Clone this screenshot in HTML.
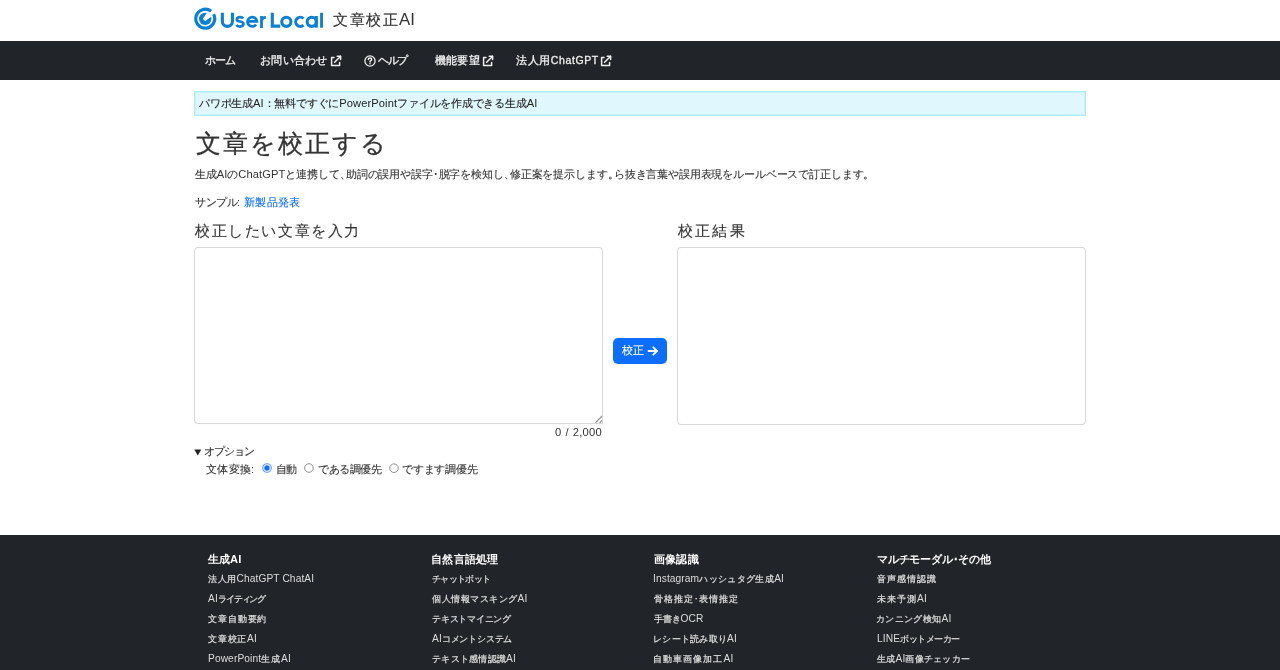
<!DOCTYPE html>
<html lang="ja">
<head>
<meta charset="utf-8">
<style>
*{box-sizing:border-box;margin:0;padding:0}
html,body{width:1280px;height:670px;overflow:hidden;background:#fff}
body{font-family:"Liberation Sans",sans-serif;color:#333;position:relative}
.t{position:absolute;white-space:nowrap;line-height:1.2;will-change:transform}
#nav{position:absolute;left:0;top:41px;width:1280px;height:39px;background:#212529}
#alert{position:absolute;left:194px;top:91px;width:892px;height:25px;background:#dff7fd;border:1px solid #acedfb;box-shadow:inset 0 0 0 1px #c6f2fc}
.box{position:absolute;top:247px;width:409px;height:177px;border:1px solid #d8d8d8;border-radius:4px;box-shadow:0 0 1.5px rgba(0,0,0,0.06);background:#fff}
#btn{position:absolute;left:613px;top:338px;width:54px;height:26px;background:#0d6efd;border-radius:5px}
#foot{position:absolute;left:0;top:535px;width:1280px;height:135px;background:#212529}
.L{letter-spacing:0.1px;-webkit-text-stroke:0;line-height:0}
.P{letter-spacing:-0.45em}
.radio{position:absolute;width:10px;height:10px;border-radius:50%;border:1px solid #8a8a8a;background:#fff}
</style>
</head>
<body>
<svg style="position:absolute;left:192px;top:5px" width="28" height="28" viewBox="0 0 28 28">
<defs><mask id="m1"><rect width="28" height="28" fill="#fff"/><circle cx="13.2" cy="13.8" r="1.9" fill="#000"/><path d="M11.1 13.8L15.3 7L20.4 11L13.8 15.5Z" fill="#000"/></mask></defs>
<path d="M19.1 6.25A9.45 9.45 0 1 0 21.6 9.25" fill="none" stroke="#0b80d4" stroke-width="3.2"/>
<circle cx="13.2" cy="13.85" r="6.2" fill="#0b80d4" mask="url(#m1)"/>
</svg><svg style="position:absolute;left:218px;top:8px" width="110" height="24" viewBox="0 0 110 24"><g fill="none" stroke="#0b80d4" stroke-width="3.1">
<path d="M4.35 4.8V13.3A5.05 5.05 0 0 0 14.45 13.3V4.8"/>
<path d="M25.3 10.5C24.5 9.5 23.3 9.05 22.1 9.05C20.1 9.05 18.9 10.0 18.9 11.4C18.9 14.3 25.45 12.8 25.45 15.8C25.45 17.5 24.0 18.55 21.9 18.55C20.4 18.55 19.0 18.0 18.2 17.0" stroke-width="2.7"/>
<path d="M29.5 13.3H38.9A4.7 4.7 0 1 0 38.05 16.5" stroke-width="2.7"/>
<path d="M43.5 19.9V7.9M43.5 12.6C44 10.3 45.6 9.3 47.9 9.3" stroke-width="2.8"/>
<path d="M54.3 4.8V18.15H62.2"/>
<circle cx="68.35" cy="13.8" r="4.6"/>
<path d="M85.5 10.5A4.6 4.6 0 1 0 85.5 17.1"/>
<circle cx="93.75" cy="13.8" r="4.6"/>
<path d="M98.3 8V19.7"/>
<path d="M103.55 4.8V19.7" stroke-width="2.9"/>
</g></svg>
<div class="t" id="logo2" style="left:333.00px;top:11.15px;font-size:15.00px;letter-spacing:1.500px;color:#333;-webkit-text-stroke:0.2px currentColor;">文章校正<span class="L" style="font-size:1.12em">AI</span></div>
<div id="nav"></div>
<div class="t" id="n1" style="left:205.00px;top:54.05px;font-size:10.50px;letter-spacing:-1.000px;color:#f0f0f0;-webkit-text-stroke:0.3px currentColor;">ホーム</div>
<div class="t" id="n2" style="left:260.00px;top:54.05px;font-size:10.50px;letter-spacing:0.300px;color:#f0f0f0;-webkit-text-stroke:0.3px currentColor;">お問い合わせ</div>
<svg width="12" height="12" viewBox="0 0 12 12" style="position:absolute;left:329.8px;top:55px"><g fill="none" stroke="#f0f0f0" stroke-width="1.5" stroke-linecap="round" stroke-linejoin="round"><path d="M4 2.5H1.6V10.6H9.6V7.6"/><path d="M4.6 7.2L10.6 1.2"/><path d="M7.2 1.2H10.6V4.6"/></g></svg>
<svg width="12" height="12" viewBox="0 0 12 12" style="position:absolute;left:364px;top:55px"><circle cx="6" cy="6" r="5.1" fill="none" stroke="#f0f0f0" stroke-width="1.3"/><path d="M4.3 4.6C4.3 3.6 5 3 6 3S7.7 3.6 7.7 4.5C7.7 5.5 6.4 5.7 6.1 6.4V7" fill="none" stroke="#f0f0f0" stroke-width="1.5" stroke-linecap="round"/><circle cx="6.05" cy="8.8" r="0.8" fill="#f0f0f0"/></svg>
<div class="t" id="n3" style="left:378.20px;top:54.05px;font-size:10.50px;letter-spacing:-1.500px;color:#f0f0f0;-webkit-text-stroke:0.3px currentColor;">ヘルプ</div>
<div class="t" id="n4" style="left:434.60px;top:54.05px;font-size:10.50px;letter-spacing:0.167px;color:#f0f0f0;-webkit-text-stroke:0.3px currentColor;">機能要望</div>
<svg width="12" height="12" viewBox="0 0 12 12" style="position:absolute;left:481.5px;top:55px"><g fill="none" stroke="#f0f0f0" stroke-width="1.5" stroke-linecap="round" stroke-linejoin="round"><path d="M4 2.5H1.6V10.6H9.6V7.6"/><path d="M4.6 7.2L10.6 1.2"/><path d="M7.2 1.2H10.6V4.6"/></g></svg>
<div class="t" id="n5" style="left:516.40px;top:54.05px;font-size:10.50px;letter-spacing:0.611px;color:#f0f0f0;-webkit-text-stroke:0.3px currentColor;">法人用ChatGPT</div>
<svg width="12" height="12" viewBox="0 0 12 12" style="position:absolute;left:599.8px;top:55px"><g fill="none" stroke="#f0f0f0" stroke-width="1.5" stroke-linecap="round" stroke-linejoin="round"><path d="M4 2.5H1.6V10.6H9.6V7.6"/><path d="M4.6 7.2L10.6 1.2"/><path d="M7.2 1.2H10.6V4.6"/></g></svg>
<div id="alert"></div>
<div class="t" id="alert_t" style="left:199.00px;top:96.75px;font-size:10.60px;letter-spacing:-0.208px;color:#222;-webkit-text-stroke:0.12px currentColor;">パワポ生成<span class="L" style="font-size:1.05em">AI</span>：無料ですぐに<span class="L" style="font-size:1.05em">PowerPoint</span>ファイルを作成できる生成<span class="L" style="font-size:1.05em">AI</span></div>
<div class="t" id="h1" style="left:195.60px;top:127.70px;font-size:25.00px;letter-spacing:2.000px;color:#333;-webkit-text-stroke:0.3px currentColor;">文章を校正する</div>
<div class="t" id="desc" style="left:194.60px;top:168.40px;font-size:10.60px;letter-spacing:-0.148px;color:#333;-webkit-text-stroke:0.12px currentColor;">生成<span class="L" style="font-size:1.05em">AI</span>の<span class="L" style="font-size:1.05em">ChatGPT</span>と連携して<span class="P">、</span>助詞の誤用や誤字･脱字を検知し<span class="P">、</span>修正案を提示します<span class="P">。</span>ら抜き言葉や誤用表現をルールベースで訂正します<span class="P">。</span></div>
<div class="t" id="sample" style="left:195.00px;top:196.33px;font-size:10.60px;letter-spacing:-0.500px;color:#333;-webkit-text-stroke:0.12px currentColor;">サンプル<span class="L" style="font-size:1.05em">:</span></div>
<div class="t" id="sample_l" style="left:243.80px;top:196.33px;font-size:10.60px;letter-spacing:0.250px;color:#0d6efd;-webkit-text-stroke:0.12px currentColor;">新製品発表</div>
<div class="t" id="h2a" style="left:194.60px;top:222.40px;font-size:15.00px;letter-spacing:1.611px;color:#333;-webkit-text-stroke:0.12px currentColor;">校正したい文章を入力</div>
<div class="t" id="h2b" style="left:677.60px;top:222.40px;font-size:15.00px;letter-spacing:2.167px;color:#333;-webkit-text-stroke:0.12px currentColor;">校正結果</div>
<div class="box" style="left:194px;border-bottom-right-radius:0"></div>
<svg width="8" height="8" style="position:absolute;left:594px;top:415px"><path d="M8.2 1L1.4 7.8M8.2 5.2L5.6 7.8" stroke="#858585" stroke-width="1.1"/></svg>
<div class="box" style="left:677px;height:178px"></div>
<div id="btn"></div>
<div class="t" id="btn_t" style="left:622.40px;top:344.10px;font-size:10.60px;letter-spacing:-0.500px;color:#fff;-webkit-text-stroke:0.12px currentColor;">校正</div>
<svg width="12" height="12" viewBox="0 0 12 12" style="position:absolute;left:647px;top:345px"><g fill="none" stroke="#fff" stroke-width="1.8" stroke-linecap="round" stroke-linejoin="round"><path d="M1.5 6H9.8"/><path d="M6.3 2.3L10 6L6.3 9.7"/></g></svg>
<div class="t" id="counter" style="left:555.40px;top:426.30px;font-size:11.20px;letter-spacing:0.250px;color:#333;word-spacing:0.6px">0 / 2,000</div>
<svg width="8" height="7" style="position:absolute;left:194px;top:449px"><path d="M0.3 0.6H7.3L3.8 6.4Z" fill="#222"/></svg>
<div class="t" id="opt" style="left:204.20px;top:444.60px;font-size:10.60px;letter-spacing:-1.000px;color:#333;-webkit-text-stroke:0.12px currentColor;">オプション</div>
<div class="t" id="bunta" style="left:205.80px;top:462.73px;font-size:10.60px;letter-spacing:0.250px;color:#333;-webkit-text-stroke:0.12px currentColor;">文体変換<span class="L" style="font-size:1.05em">:</span></div>
<svg width="12" height="12" style="position:absolute;left:261.2px;top:462px"><circle cx="6" cy="6" r="4.3" fill="#fff" stroke="#5b9cf8" stroke-width="1.1"/><circle cx="6" cy="6" r="2.7" fill="#0d6efd"/></svg>
<div class="t" id="r1" style="left:276.00px;top:462.73px;font-size:10.60px;letter-spacing:-1.500px;color:#333;-webkit-text-stroke:0.12px currentColor;">自動</div>
<svg width="12" height="12" style="position:absolute;left:303px;top:462px"><circle cx="5.9" cy="6" r="4.3" fill="#fff" stroke="#8f8f8f" stroke-width="1"/></svg>
<div class="t" id="r2" style="left:318.00px;top:462.73px;font-size:10.60px;letter-spacing:-0.500px;color:#333;-webkit-text-stroke:0.12px currentColor;">である調優先</div>
<svg width="12" height="12" style="position:absolute;left:387.5px;top:462px"><circle cx="6" cy="6.2" r="4.3" fill="#fff" stroke="#8f8f8f" stroke-width="1"/></svg>
<div class="t" id="r3" style="left:402.20px;top:462.73px;font-size:10.60px;letter-spacing:-0.167px;color:#333;-webkit-text-stroke:0.12px currentColor;">ですます調優先</div>
<div id="foot"></div>
<div class="t" id="fh0" style="left:208.20px;top:553.30px;font-size:10.60px;letter-spacing:0.000px;color:#fff;font-weight:bold;">生成<span class="L" style="font-size:1.05em">AI</span></div>
<div class="t" id="fl00" style="left:208.20px;top:574.00px;font-size:8.50px;letter-spacing:0.500px;color:#dcdcdc;-webkit-text-stroke:0.25px currentColor;">法人用<span class="L" style="font-size:1.2em">ChatGPT ChatAI</span></div>
<div class="t" id="fl01" style="left:208.20px;top:594.00px;font-size:8.50px;letter-spacing:-1.100px;color:#dcdcdc;-webkit-text-stroke:0.25px currentColor;"><span class="L" style="font-size:1.2em">AI</span>ライティング</div>
<div class="t" id="fl02" style="left:208.20px;top:614.00px;font-size:8.50px;letter-spacing:0.900px;color:#dcdcdc;-webkit-text-stroke:0.25px currentColor;">文章自動要約</div>
<div class="t" id="fl03" style="left:208.20px;top:634.00px;font-size:8.50px;letter-spacing:0.750px;color:#dcdcdc;-webkit-text-stroke:0.25px currentColor;">文章校正<span class="L" style="font-size:1.2em">AI</span></div>
<div class="t" id="fl04" style="left:208.20px;top:654.00px;font-size:8.50px;letter-spacing:1.000px;color:#dcdcdc;-webkit-text-stroke:0.25px currentColor;"><span class="L" style="font-size:1.2em">PowerPoint</span>生成<span class="L" style="font-size:1.2em">AI</span></div>
<div class="t" id="fh1" style="left:430.80px;top:553.30px;font-size:10.60px;letter-spacing:0.300px;color:#fff;font-weight:bold;">自然言語処理</div>
<div class="t" id="fl10" style="left:431.80px;top:574.00px;font-size:8.50px;letter-spacing:-0.667px;color:#dcdcdc;-webkit-text-stroke:0.25px currentColor;">チャットボット</div>
<div class="t" id="fl11" style="left:431.80px;top:594.00px;font-size:8.50px;letter-spacing:0.500px;color:#dcdcdc;-webkit-text-stroke:0.25px currentColor;">個人情報マスキング<span class="L" style="font-size:1.2em">AI</span></div>
<div class="t" id="fl12" style="left:431.80px;top:614.00px;font-size:8.50px;letter-spacing:-0.250px;color:#dcdcdc;-webkit-text-stroke:0.25px currentColor;">テキストマイニング</div>
<div class="t" id="fl13" style="left:431.80px;top:634.00px;font-size:8.50px;letter-spacing:-0.214px;color:#dcdcdc;-webkit-text-stroke:0.25px currentColor;"><span class="L" style="font-size:1.2em">AI</span>コメントシステム</div>
<div class="t" id="fl14" style="left:431.80px;top:654.00px;font-size:8.50px;letter-spacing:0.250px;color:#dcdcdc;-webkit-text-stroke:0.25px currentColor;">テキスト感情認識<span class="L" style="font-size:1.2em">AI</span></div>
<div class="t" id="fh2" style="left:654.40px;top:553.30px;font-size:10.60px;letter-spacing:0.167px;color:#fff;font-weight:bold;">画像認識</div>
<div class="t" id="fl20" style="left:653.40px;top:574.00px;font-size:8.50px;letter-spacing:0.375px;color:#dcdcdc;-webkit-text-stroke:0.25px currentColor;"><span class="L" style="font-size:1.2em">Instagram</span>ハッシュタグ生成<span class="L" style="font-size:1.2em">AI</span></div>
<div class="t" id="fl21" style="left:654.40px;top:594.00px;font-size:8.50px;letter-spacing:0.875px;color:#dcdcdc;-webkit-text-stroke:0.25px currentColor;">骨格推定･表情推定</div>
<div class="t" id="fl22" style="left:654.40px;top:614.00px;font-size:8.50px;letter-spacing:-0.167px;color:#dcdcdc;-webkit-text-stroke:0.25px currentColor;">手書き<span class="L" style="font-size:1.2em">OCR</span></div>
<div class="t" id="fl23" style="left:653.40px;top:634.00px;font-size:8.50px;letter-spacing:0.250px;color:#dcdcdc;-webkit-text-stroke:0.25px currentColor;">レシート読み取り<span class="L" style="font-size:1.2em">AI</span></div>
<div class="t" id="fl24" style="left:653.40px;top:654.00px;font-size:8.50px;letter-spacing:1.071px;color:#dcdcdc;-webkit-text-stroke:0.25px currentColor;">自動車画像加工<span class="L" style="font-size:1.2em">AI</span></div>
<div class="t" id="fh3" style="left:877.00px;top:553.30px;font-size:10.60px;letter-spacing:-0.200px;color:#fff;font-weight:bold;">マルチモーダル･その他</div>
<div class="t" id="fl30" style="left:877.00px;top:574.00px;font-size:8.50px;letter-spacing:1.100px;color:#dcdcdc;-webkit-text-stroke:0.25px currentColor;">音声感情認識</div>
<div class="t" id="fl31" style="left:877.00px;top:594.00px;font-size:8.50px;letter-spacing:1.000px;color:#dcdcdc;-webkit-text-stroke:0.25px currentColor;">未来予測<span class="L" style="font-size:1.2em">AI</span></div>
<div class="t" id="fl32" style="left:876.00px;top:614.00px;font-size:8.50px;letter-spacing:0.357px;color:#dcdcdc;-webkit-text-stroke:0.25px currentColor;">カンニング検知<span class="L" style="font-size:1.2em">AI</span></div>
<div class="t" id="fl33" style="left:877.00px;top:634.00px;font-size:8.50px;letter-spacing:-0.500px;color:#dcdcdc;-webkit-text-stroke:0.25px currentColor;"><span class="L" style="font-size:1.2em">LINE</span>ボットメーカー</div>
<div class="t" id="fl34" style="left:877.00px;top:654.00px;font-size:8.50px;letter-spacing:0.250px;color:#dcdcdc;-webkit-text-stroke:0.25px currentColor;">生成<span class="L" style="font-size:1.2em">AI</span>画像チェッカー</div>
</body>
</html>
